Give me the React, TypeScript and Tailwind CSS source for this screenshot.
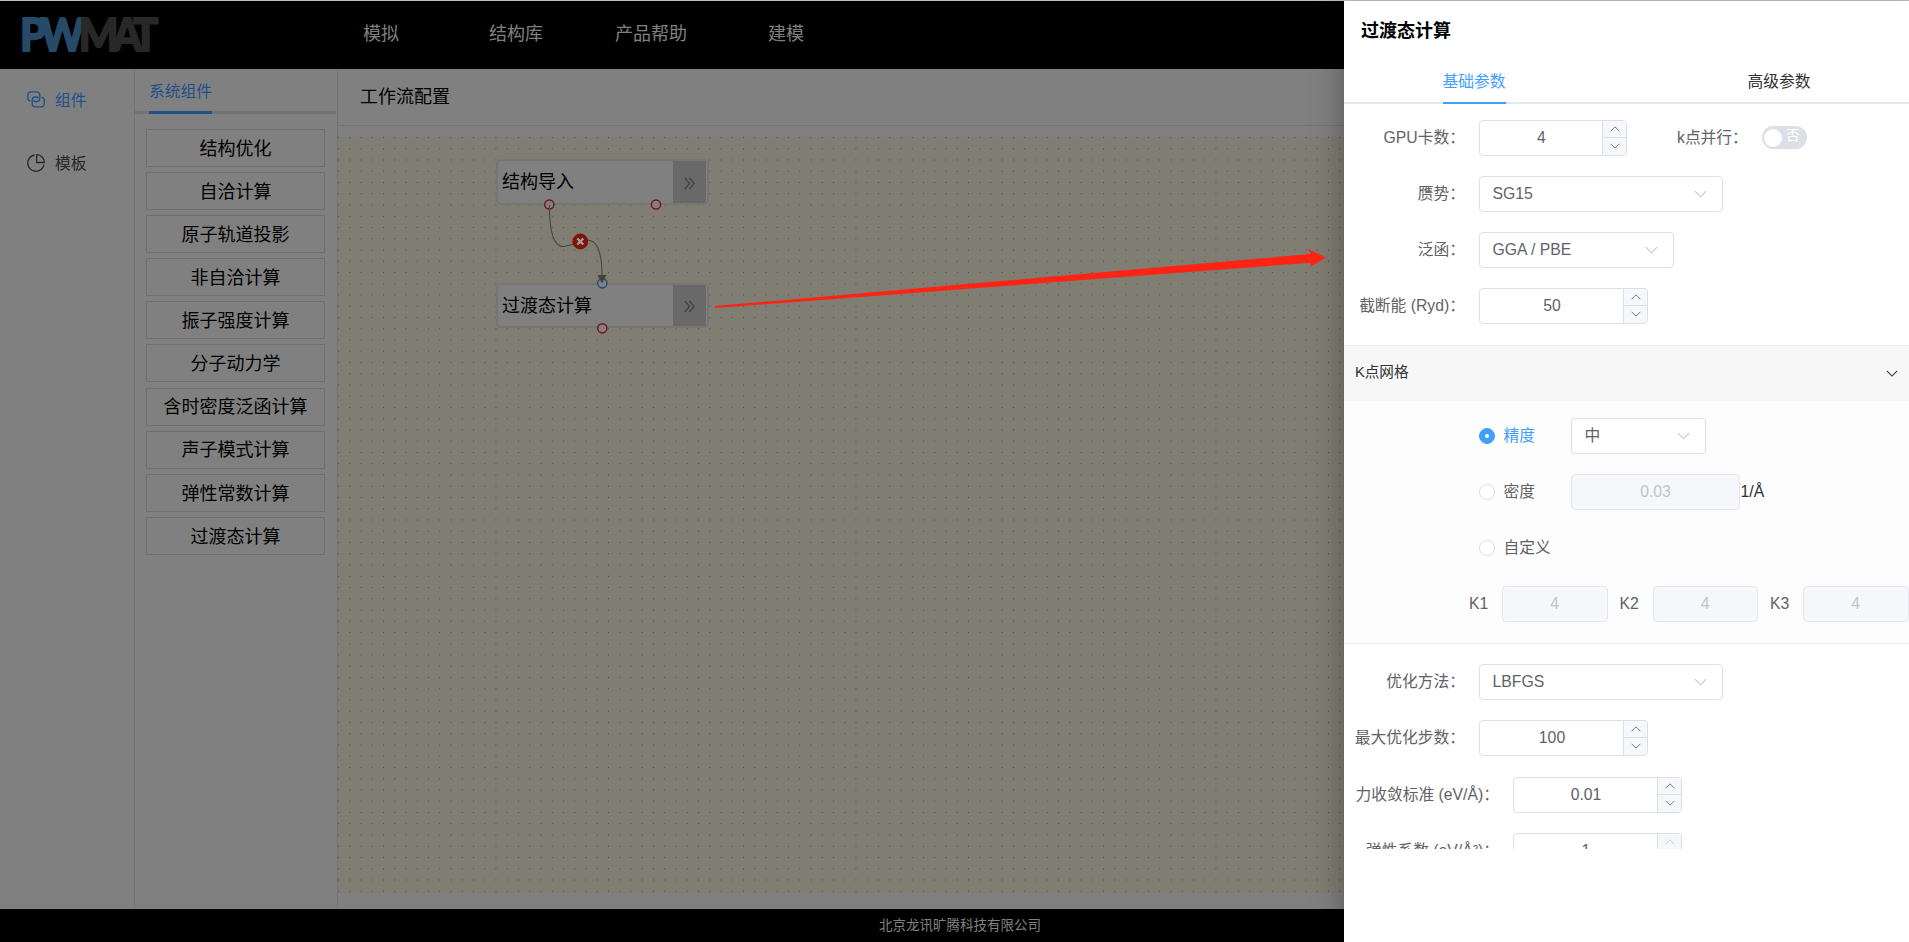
import React from "react";

type Kids = { children?: React.ReactNode };

const FONT = "font-['Liberation_Sans','Noto_Sans_CJK_SC',sans-serif]";
const components = [
  "结构优化", "自洽计算", "原子轨道投影", "非自洽计算", "振子强度计算",
  "分子动力学", "含时密度泛函计算", "声子模式计算", "弹性常数计算", "过渡态计算",
];

function Chevron({ up = false, className = "" }: { up?: boolean; className?: string }) {
  return (
    <svg viewBox="0 0 14 8" className={className} fill="none" stroke="currentColor" strokeWidth="1.2">
      <path d={up ? "M1 7 7 1l6 6" : "M1 1l6 6 6-6"} />
    </svg>
  );
}

function Row({ label, wide = false, children }: Kids & { label: string; wide?: boolean }) {
  return (
    <div className="mb-5 flex h-9 items-center">
      <div className={`${wide ? "w-[155px]" : "w-[121px]"} shrink-0 whitespace-nowrap text-right text-[#606266]`}>{label}</div>
      <div className="ml-[14px] flex items-center">{children}</div>
    </div>
  );
}

function NumberBox({ value, width, dimUp = false }: { value: string; width: string; dimUp?: boolean }) {
  return (
    <div className={`flex h-9 ${width} overflow-hidden rounded-[4px] border border-[#dcdfe6] bg-white text-[#606266]`}>
      <div className="flex flex-1 items-center justify-center pl-px">{value}</div>
      <div className="flex w-[24px] flex-col border-l border-[#dcdfe6] bg-[#f5f7fa]">
        <div className={`flex flex-1 items-center justify-center border-b border-[#dcdfe6] ${dimUp ? "text-[#c0c4cc]" : ""}`}>
          <Chevron up className="h-[6px] w-[10px]" />
        </div>
        <div className="flex flex-1 items-center justify-center pb-px">
          <Chevron className="h-[6px] w-[10px]" />
        </div>
      </div>
    </div>
  );
}

function Select({ value, width }: { value: string; width: string }) {
  return (
    <div className={`flex h-9 ${width} items-center justify-between rounded-[4px] border border-[#dcdfe6] bg-white pl-[12.5px] pr-[15px] text-[#606266]`}>
      <span>{value}</span>
      <Chevron className="h-[8px] w-[13px] text-[#c0c4cc]" />
    </div>
  );
}

function Disabled({ value, width }: { value: string; width: string }) {
  return (
    <div className={`flex h-9 ${width} shrink-0 items-center justify-center rounded-[4px] border border-[#e4e7ed] bg-[#f5f7fa] text-[#c0c4cc]`}>
      {value}
    </div>
  );
}

function Radio({ label, on = false }: { label: string; on?: boolean }) {
  return (
    <div className="flex w-[92px] items-center gap-[8.5px] whitespace-nowrap">
      <span className={`flex size-4 shrink-0 items-center justify-center rounded-full border ${on ? "border-[#409eff] bg-[#409eff]" : "border-[#dcdfe6] bg-white"}`}>
        {on && <span className="size-1 rounded-full bg-white" />}
      </span>
      <span className={on ? "text-[#409eff]" : "text-[#606266]"}>{label}</span>
    </div>
  );
}

function Node({ label, place }: { label: string; place: string }) {
  return (
    <div className={`absolute ${place} flex w-[213px] items-stretch rounded-[5px] border-2 border-[#747676] bg-[#808080] pr-px`}>
      <div className="flex flex-1 items-center pl-[4px] pt-px text-[18px] text-black">{label}</div>
      <div className="flex w-[33px] items-center justify-center bg-[#696969] pt-[2px] text-[#404040]">
        <svg viewBox="0 0 12 14" className="h-[13px] w-[11px]" fill="none" stroke="currentColor" strokeWidth="1.3">
          <path d="M1 1l5 6-5 6M6 1l5 6-5 6" />
        </svg>
      </div>
    </div>
  );
}

function Canvas() {
  return (
    <div className="relative h-[756px] overflow-hidden bg-[#807d73]">
      <svg className="absolute inset-0 size-full" aria-hidden="true">
        <defs>
          <pattern id="grid" width="11.25" height="11.25" patternUnits="userSpaceOnUse">
            <rect x="0" y="0" width="1" height="1" fill="#4b4a45" />
          </pattern>
        </defs>
        <rect width="100%" height="100%" fill="url(#grid)" />
      </svg>
      <Node label="结构导入" place="left-[158px] top-[22px] h-[46px]" />
      <Node label="过渡态计算" place="left-[158px] top-[146px] h-[45px]" />
      <svg className="absolute left-0 top-0 h-[300px] w-[500px]" fill="none">
        <circle cx="211.3" cy="67.5" r="4.6" stroke="#7a1518" strokeWidth="1.5" fill="#808080" />
        <circle cx="318" cy="67.5" r="4.6" stroke="#7a1518" strokeWidth="1.5" fill="#808080" />
        <circle cx="264.3" cy="146.3" r="4.6" stroke="#254e78" strokeWidth="1.5" fill="#808080" />
        <circle cx="264.3" cy="191.3" r="4.6" stroke="#7a1518" strokeWidth="1.5" fill="#808080" />
        <path d="M211.3 68C211.5 96 216 109.500 225 109.500C234 109.500 241 103 249 103C260 103 264 117 264 139" stroke="#444642" strokeWidth="1.1" />
        <path d="M259.500 138h9l-4.500 8.500z" fill="#404240" />
        <circle cx="242.300" cy="104.500" r="7.900" fill="#801308" />
        <path d="M239.300 101.500l6 6m0-6l-6 6" stroke="#a3a3a3" strokeWidth="2.200" />
      </svg>
    </div>
  );
}

function Drawer() {
  return (
    <aside className="absolute right-0 top-px flex h-[941px] w-[565px] flex-col bg-white text-[15.75px] text-[#303133] shadow-[0_9px_11px_-6px_rgba(0,0,0,0.2),0_18px_27px_2px_rgba(0,0,0,0.14),0_7px_34px_6px_rgba(0,0,0,0.12)]">
      <h2 className="h-[60px] shrink-0 pl-[17px] pt-[16px] text-[18px] font-bold leading-7 text-black">过渡态计算</h2>
      <div className="flex h-[43px] shrink-0 border-b-2 border-[#e4e7ed]">
        <div className="flex w-[260px] justify-center">
          <span className="h-[43px] border-b-2 border-[#409eff] pt-[9px] leading-6 text-[#409eff]">基础参数</span>
        </div>
        <div className="ml-[45px] flex w-[260px] justify-center pt-[9px] leading-6">高级参数</div>
      </div>
      <div className="h-[745px] overflow-hidden">
        <div className="h-[241px] pt-[16px]">
          <Row label="GPU卡数：">
            <NumberBox value="4" width="w-[148px]" />
            <span className="ml-[50px] w-[63px] whitespace-nowrap text-[#606266]">k点并行：</span>
            <span className="mb-px ml-[22px] flex h-[23px] w-[45px] items-center rounded-full bg-[#dcdfe6] pl-[2px] text-[13.5px] text-white">
              <i className="mr-[4px] size-[18px] rounded-full bg-white" />
              <span className="pb-[2px]">否</span>
            </span>
          </Row>
          <Row label="赝势："><Select value="SG15" width="w-[244px]" /></Row>
          <Row label="泛函："><Select value="GGA / PBE" width="w-[195px]" /></Row>
          <Row label="截断能 (Ryd)："><NumberBox value="50" width="w-[169px]" /></Row>
        </div>
        <div className="flex h-[56px] items-center justify-between border-t border-[#ebeef5] bg-[#f7f7f7] pb-px pl-[11px] pr-[11px] text-[14.6px]">
          <span>K点网格</span>
          <Chevron className="h-[7px] w-[12px]" />
        </div>
        <div className="flex h-[243px] flex-col gap-5 border-b border-[#ebeef5] bg-[#fdfdfd] pt-[17px]">
          <div className="flex h-9 items-center pl-[135px]"><Radio on label="精度" /><Select value="中" width="w-[135px]" /></div>
          <div className="flex h-9 items-center pl-[135px]"><Radio label="密度" /><Disabled value="0.03" width="w-[169px]" /><span className="ml-[0.5px]">1/Å</span></div>
          <div className="flex h-9 items-center pl-[135px]"><Radio label="自定义" /></div>
          <div className="flex h-9 items-center pl-[125px] text-[#606266]">
            {["K1", "K2", "K3"].map((k) => (
              <div key={k} className="flex w-[150.5px] shrink-0 items-center">
                <span className="w-[33px]">{k}</span>
                <Disabled value="4" width="w-[105.5px]" />
              </div>
            ))}
          </div>
        </div>
        <div className="pt-[20px]">
          <Row label="优化方法："><Select value="LBFGS" width="w-[244px]" /></Row>
          <Row label="最大优化步数："><NumberBox value="100" width="w-[169px]" /></Row>
          <div className="pt-px">
            <Row wide label="力收敛标准 (eV/Å)："><NumberBox value="0.01" width="w-[169px]" /></Row>
            <Row wide label="弹性系数 (eV/Å²)："><NumberBox value="1" width="w-[169px]" dimUp /></Row>
          </div>
        </div>
      </div>
    </aside>
  );
}

export default function App() {
  return (
    <div className={`relative flex h-[942px] w-[1909px] flex-col overflow-hidden bg-[#808080] leading-normal ${FONT}`}>
      <header className="flex h-[69px] shrink-0 border-t border-[#bfbfbf] bg-black text-[18px] text-[#808080]">
        <div className="flex w-[363px] pl-[20px] pt-[4px]">
          <svg className="h-[60px] w-[160px]" viewBox="0 0 160 60">
            <text x="0" y="46.500" transform="scale(.91 1)" fontFamily="Lato" fontWeight="900" fontSize="46" letterSpacing="-6.500" strokeWidth="1.800">
              <tspan fill="#264a68" stroke="#264a68">PW</tspan>
              <tspan fill="#282828" stroke="#282828">MAT</tspan>
            </text>
          </svg>
        </div>
        <nav className="flex pt-[19px] leading-7">
          <span className="mr-[90px]">模拟</span>
          <span className="mr-[72px]">结构库</span>
          <span className="mr-[81px]">产品帮助</span>
          <span>建模</span>
        </nav>
      </header>
      <main className="flex h-[840px] shrink-0">
        <nav className="flex w-[135px] flex-col border-r border-[#727375] pl-[27px] pt-[20px] text-[15.75px] text-[#262729]">
          <div className="flex h-6 items-center gap-[10px] text-[#20508a]">
            <svg viewBox="0 0 18 17" className="mb-[3px] h-[17px] w-[18px]" fill="none" stroke="currentColor" strokeWidth="1.3">
              <path d="M3.500 10.200A3.300 3.300 0 0 1 .8 7V4A3.300 3.300 0 0 1 4.100.8h5.400A3.300 3.300 0 0 1 12.800 4v3.200a3.300 3.300 0 0 1-3.300 3.300H8.300a1.500 1.500 0 0 1-1.500-1.500" />
              <path d="M14.500 6.200A3.300 3.300 0 0 1 17.200 9.500v3a3.300 3.300 0 0 1-3.300 3.300H8.500a3.300 3.300 0 0 1-3.300-3.300V9.300A3.300 3.300 0 0 1 8.500 6h1.200a1.500 1.500 0 0 1 1.500 1.500" />
            </svg>
            组件
          </div>
          <div className="mt-[39px] flex h-6 items-center gap-[10px]">
            <svg viewBox="0 0 18 18" className="mb-[2px] size-[18px]" fill="none" stroke="currentColor" strokeWidth="1.3">
              <path d="M7.500 1A8.200 8.200 0 1 0 17 10.500M9.700.7v7.800h7.600A7.700 7.700 0 0 0 9.700.7z" />
            </svg>
            模板
          </div>
        </nav>
        <section className="flex w-[203px] flex-col border-r border-[#727375]">
          <div className="flex h-[45px] w-[201px] border-b-[3px] border-[#727376] pl-[14px]">
            <span className="h-[45px] border-b-[3px] border-[#20508a] pt-[11px] text-[15.75px] leading-6 text-[#20508a]">系统组件</span>
          </div>
          <div className="flex flex-col gap-[5.1px] pl-[11px] pt-[15px]">
            {components.map((name) => (
              <div key={name} className="flex h-[38px] w-[179px] items-center justify-center border border-[#6f6f6f] pt-[2.5px] text-[18px] text-black">{name}</div>
            ))}
          </div>
        </section>
        <section className="flex flex-1 flex-col">
          <h1 className="h-[57px] border-b border-[#727375] pl-[22px] pt-[14px] text-[18px] leading-7 text-black">工作流配置</h1>
          <div className="pt-[11px]"><Canvas /></div>
        </section>
      </main>
      <footer className="flex h-[33px] items-center justify-center bg-black pl-[11px] pt-[2px] text-[13.5px] text-[#808080]">北京龙讯旷腾科技有限公司</footer>
      <Drawer />
      <svg className="absolute left-[714px] top-[246px] h-[64px] w-[614px]" fill="#ff2313">
        <path d="M1 60L597 8L594 3L612 11.500L596 21L597 16.700L1 62z" />
      </svg>
    </div>
  );
}
